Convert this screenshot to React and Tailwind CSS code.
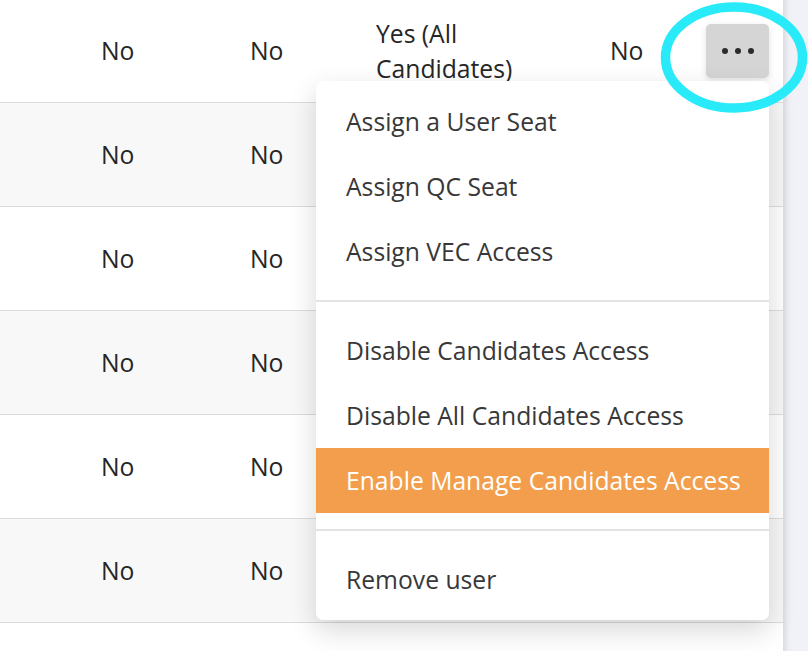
import React from "react";

const rows = [
  { a: "No", b: "No", c: "Yes (All Candidates)", d: "No", shaded: false, first: true },
  { a: "No", b: "No", shaded: true },
  { a: "No", b: "No", shaded: false },
  { a: "No", b: "No", shaded: true },
  { a: "No", b: "No", shaded: false },
  { a: "No", b: "No", shaded: true },
];

const groups = [
  ["Assign a User Seat", "Assign QC Seat", "Assign VEC Access"],
  ["Disable Candidates Access", "Disable All Candidates Access", "Enable Manage Candidates Access"],
  ["Remove user"],
];

const MenuItem = ({ label, active }) => (
  <div
    className={`h-[65px] flex items-center pl-[30px] text-[24.7px] whitespace-nowrap cursor-pointer ${
      active ? "bg-[#f29e4c] text-white" : "text-[#383838] hover:bg-gray-50"
    }`}
  >
    {label}
  </div>
);

export default function App() {
  return (
    <div className="w-[808px] h-[651px] overflow-hidden flex bg-white font-['Open_Sans',sans-serif]">
      <div className="relative w-[783px] flex flex-col">
        <div className="-mt-[1px]">
          {rows.map((row, i) => (
            <div
              key={i}
              className={`h-[104px] border-b border-[#dcdcdc] flex items-center text-[24.7px] text-[#262626] ${
                row.shaded ? "bg-[#f8f8f8]" : "bg-white"
              }`}
            >
              <div className="w-[101px]" />
              <div className="w-[149px]">{row.a}</div>
              <div className="w-[126px]">{row.b}</div>
              <div className="w-[234px] leading-[35px] pr-[60px]">{row.c}</div>
              <div className="w-[96px]">{row.d}</div>
              {row.first && (
                <button className="w-[63px] h-[54px] rounded-[5px] bg-[#d5d5d5] shadow-[0_2px_6px_rgba(0,0,0,0.12)] flex items-center justify-center gap-[7px]">
                  <span className="w-[6px] h-[6px] rounded-full bg-[#2b2b2b]" />
                  <span className="w-[6px] h-[6px] rounded-full bg-[#2b2b2b]" />
                  <span className="w-[6px] h-[6px] rounded-full bg-[#2b2b2b]" />
                </button>
              )}
            </div>
          ))}
        </div>

        {/* dropdown */}
        <div className="absolute left-[316px] top-[81px] w-[453px] bg-white rounded-[7px] py-2 shadow-[0_10px_28px_rgba(0,0,0,0.16)]">
          {groups.map((items, gi) => (
            <div key={gi}>
              {gi > 0 && <div className="h-[2px] bg-[#e3e3e3] my-4" />}
              {items.map((label) => (
                <MenuItem key={label} label={label} active={label === "Enable Manage Candidates Access"} />
              ))}
            </div>
          ))}
        </div>

        {/* highlight ring */}
        <svg className="absolute left-[656px] top-0 pointer-events-none" width="160" height="120" viewBox="0 0 160 120">
          <ellipse cx="78" cy="57.5" rx="68.5" ry="50.5" fill="none" stroke="#29eaf8" strokeWidth="9.5" />
        </svg>
      </div>
      <div className="flex-1 bg-[#f1f2f7] shadow-[inset_7px_0_6px_-5px_rgba(0,0,0,0.12)]" />
    </div>
  );
}
